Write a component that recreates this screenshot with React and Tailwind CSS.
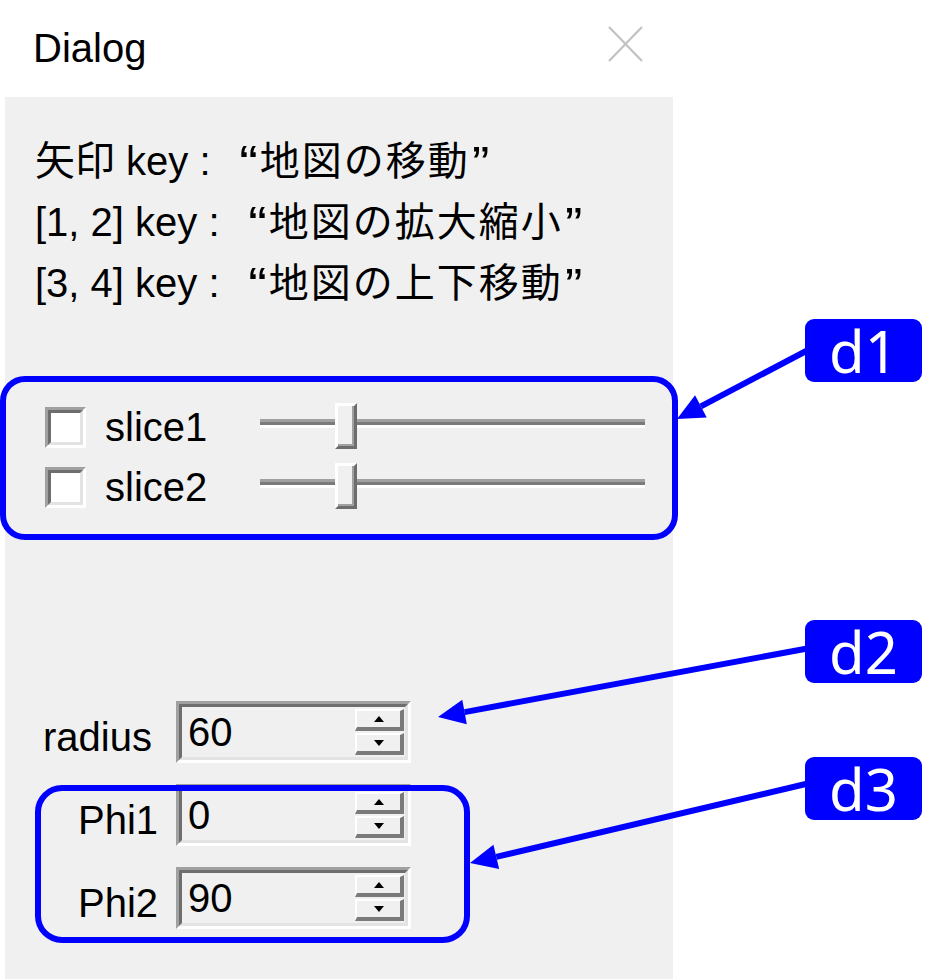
import React from 'react';

const BLUE = '#0000ff';

const arrowHead = (x1, y1, x2, y2, len = 27, w = 25) => {
    const dx = x1 - x2;
    const dy = y1 - y2;
    const d = Math.hypot(dx, dy);
    const ux = dx / d;
    const uy = dy / d;
    const bx = x2 + ux * len;
    const by = y2 + uy * len;
    const nx = -uy;
    const ny = ux;
    return {
        bx,
        by,
        points: `${x2},${y2} ${bx + (nx * w) / 2},${by + (ny * w) / 2} ${bx - (nx * w) / 2},${by - (ny * w) / 2}`,
    };
};

const Arrow = ({ from, to }) => {
    const head = arrowHead(from[0], from[1], to[0], to[1]);
    return (
        <g>
            <line x1={from[0]} y1={from[1]} x2={head.bx} y2={head.by} stroke={BLUE} strokeWidth="6" />
            <polygon points={head.points} fill={BLUE} />
        </g>
    );
};

// key help line: latin prefix, then the quoted japanese phrase
const KeyLine = ({ prefix, phrase, quoteW }) => (
    <div className="h-[61px] leading-[61px] whitespace-pre">
        {prefix}
        <span className={`inline-block ${quoteW} text-right pr-[4px]`}>
            <span className="inline-block scale-x-[1.4] scale-y-[1.25] origin-[50%_21px]">“</span>
        </span>
        <span className="tracking-[2px]">{phrase}</span>
        <span className="inline-block w-[20px] pl-[4px]">
            <span className="inline-block scale-x-[1.3] scale-y-[1.2] origin-[50%_21px]">”</span>
        </span>
    </div>
);

const Checkbox = () => (
    <div className="w-[41px] h-[41px] flex border-[3px] border-t-[#a0a0a0] border-l-[#a0a0a0] border-r-white border-b-white">
        <div className="flex-1 bg-white border-[3px] border-t-[#6d6d6d] border-l-[#6d6d6d] border-r-[#e3e3e3] border-b-[#e3e3e3]" />
    </div>
);

const Slider = () => (
    <div className="relative w-[385px] h-[50px] flex items-center">
        <div className="w-full h-[9px] mb-[8px] bg-[#7a7a7a] border-t-[3px] border-t-[#a0a0a0] border-b-[3px] border-b-white" />
        <div className="absolute left-[75px] top-[1px] w-[22px] h-[46px] flex border-[3px] border-l-white border-t-white border-r-[#6d6d6d] border-b-[#6d6d6d]">
            <div className="flex-1 bg-[#f0f0f0] border-r-[2px] border-b-[2px] border-[#a0a0a0]" />
        </div>
    </div>
);

const SpinButton = ({ up }) => (
    <div className="flex-1 flex items-center justify-center bg-[#f0f0f0] border-t-[2px] border-l-[2px] border-t-white border-l-white border-r-[4px] border-b-[4px] border-r-[#7a7a7a] border-b-[#7a7a7a]">
        <svg width="10" height="6" viewBox="0 0 10 6">
            {up ? <polygon points="5,0 10,6 0,6" fill="#000" /> : <polygon points="0,0 10,0 5,6" fill="#000" />}
        </svg>
    </div>
);

const SpinBox = ({ value }) => (
    <div className="w-[235px] h-[62px] flex border-[3px] border-t-[#a0a0a0] border-l-[#a0a0a0] border-r-white border-b-white">
        <div className="flex-1 flex items-center bg-[#f0f0f0] border-[3px] border-t-[#6d6d6d] border-l-[#6d6d6d] border-r-[#e3e3e3] border-b-[#e3e3e3]">
            <span className="pl-[6px] leading-[40px]">{value}</span>
            <div className="ml-auto mr-[1px] w-[49px] self-stretch flex flex-col gap-[2px] py-[2px]">
                <SpinButton up />
                <SpinButton />
            </div>
        </div>
    </div>
);

const SliceRow = ({ label }) => (
    <div className="h-[50px] flex items-center pl-[40px]">
        <Checkbox />
        <span className="w-[174px] pl-[19px] leading-[40px]">{label}</span>
        <Slider />
    </div>
);

const SpinRow = ({ label, value, pad }) => (
    <div className="h-[62px] flex items-center">
        <span className={`w-[171px] pt-[10px] leading-[40px] ${pad}`}>{label}</span>
        <SpinBox value={value} />
    </div>
);

const Badge = ({ text, top }) => (
    <div
        className={`absolute left-[805px] ${top} w-[117px] h-[63px] rounded-[9px] bg-[#0000ff] text-white text-[58px] leading-none flex items-center justify-center font-['Noto_Sans',sans-serif]`}
    >
        {text}
    </div>
);

export default function App() {
    return (
        <div className="relative w-[939px] h-[979px] bg-white flex flex-col text-[40px] text-black font-['Liberation_Sans','Noto_Sans_CJK_JP',sans-serif] overflow-hidden">
            {/* title bar */}
            <div className="w-[672px] h-[97px] flex items-start justify-between pl-[33px] pr-[29px] pt-[26px]">
                <span className="mt-[2px] leading-[40px]">Dialog</span>
                <svg width="35" height="36" viewBox="0 0 35 36">
                    <path d="M1 1 L34 35 M34 1 L1 35" stroke="#c2c2c2" strokeWidth="2.2" />
                </svg>
            </div>

            {/* dialog body */}
            <div className="ml-[5px] w-[668px] flex-1 bg-[#f0f0f0] flex flex-col">
                <div className="pt-[34px] pl-[30px]">
                    <KeyLine prefix="矢印 key : " phrase="地図の移動" quoteW="w-[38px]" />
                    <KeyLine prefix="[1, 2] key : " phrase="地図の拡大縮小" quoteW="w-[38px]" />
                    <KeyLine prefix="[3, 4] key : " phrase="地図の上下移動" quoteW="w-[38px]" />
                </div>

                <div className="mt-[88px] flex flex-col gap-[10px]">
                    <SliceRow label="slice1" />
                    <SliceRow label="slice2" />
                </div>

                <div className="mt-[189px] flex flex-col gap-[21px]">
                    <SpinRow label="radius" value="60" pad="pl-[38px]" />
                    <SpinRow label="Phi1" value="0" pad="pl-[73px]" />
                    <SpinRow label="Phi2" value="90" pad="pl-[73px]" />
                </div>
            </div>

            {/* annotations */}
            <svg className="absolute inset-0 pointer-events-none" width="939" height="979" viewBox="0 0 939 979">
                <rect x="3" y="379" width="672" height="158" rx="22" fill="none" stroke={BLUE} strokeWidth="6" />
                <rect x="38" y="788" width="429" height="152" rx="24" fill="none" stroke={BLUE} strokeWidth="6" />
                <Arrow from={[810, 349]} to={[677, 419]} />
                <Arrow from={[810, 648]} to={[438, 717]} />
                <Arrow from={[810, 783]} to={[470, 863]} />
            </svg>
            <Badge text="d1" top="top-[319px]" />
            <Badge text="d2" top="top-[620px]" />
            <Badge text="d3" top="top-[757px]" />
        </div>
    );
}
